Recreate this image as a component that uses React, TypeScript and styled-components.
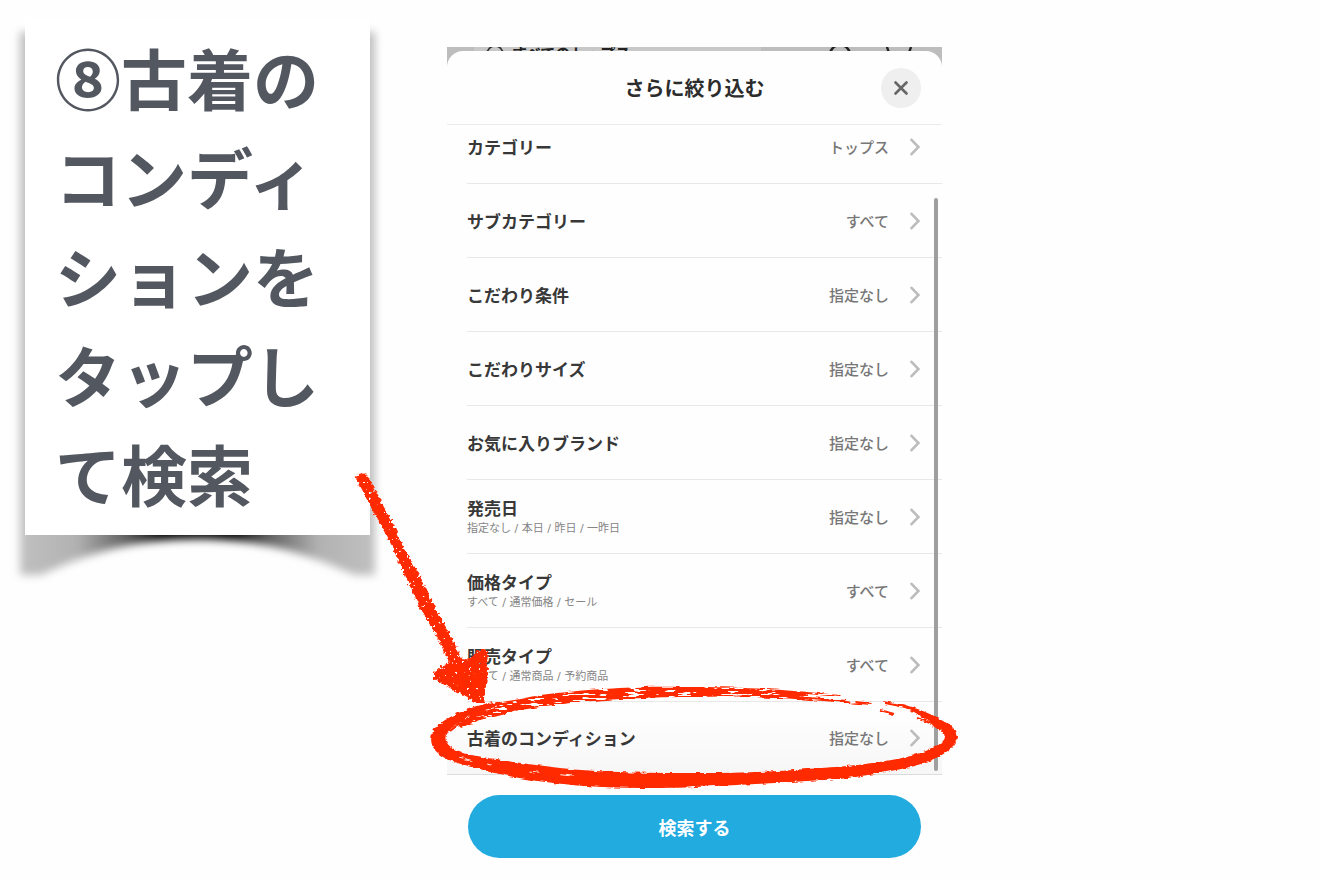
import React from "react";
import styled, { createGlobalStyle } from "styled-components";

const GlobalStyle = createGlobalStyle`
  *, *::before, *::after { box-sizing: border-box; }
  body {
    margin: 0;
    background: #fefefe;
    color: #383838;
    font-family: "Noto Sans CJK JP", "Noto Sans", sans-serif;
  }
  button { font: inherit; color: inherit; border: 0; cursor: pointer; }
`;

const RED = "#ff2a00";

const Page = styled.main`
  display: grid;
  grid-template-columns: 447fr 495fr 378fr;
  align-items: start;
  min-height: 100vh;
`;

/* ---------- instruction note ---------- */

const Note = styled.section`
  position: relative;
  isolation: isolate;
  margin: 18px 77px 0 25px;
  padding: 9px 0 13px 30px;
`;

const NoteShadow = styled.svg`
  position: absolute;
  z-index: -1;
  top: -10px;
  left: -20px;
  width: calc(100% + 40px);
  height: calc(100% + 70px);
`;

const NotePaper = styled.div`
  position: absolute;
  z-index: -1;
  inset: 0;
  background: #fff;
`;

const NoteText = styled.h1`
  margin: 0;
  color: #535760;
  font-size: 66px;
  line-height: 99px;
  font-weight: 700;
  white-space: nowrap;
`;

/* ---------- phone screen ---------- */

const Phone = styled.section`
  position: relative;
  margin-top: 47px;
`;

const Backdrop = styled.div`
  display: flex;
  justify-content: space-between;
  height: 23px;
  padding: 0 27px;
  overflow: hidden;
  background: #bdbdbd;
`;

const SearchStub = styled.div`
  display: flex;
  gap: 8px;
  flex: 0 0 65%;
  padding-left: 12px;
  background: #c8c8c8;
  color: #222;
  font-size: 15px;
  line-height: 12px;
  font-weight: 700;
`;

const StubIcons = styled.svg`
  flex: none;
  width: 90px;
  height: 23px;
`;

const Sheet = styled.div`
  position: relative;
  margin-top: -19px;
  border-radius: 16px 16px 0 0;
  background: #fefefe;
`;

const SheetHeader = styled.header`
  display: grid;
  grid-template-columns: 40px 1fr 40px;
  align-items: center;
  height: 74px;
  padding: 0 21px;
  border-bottom: 1px solid #ebebeb;
`;

const SheetTitle = styled.h2`
  grid-column: 2;
  margin: 0;
  color: #2c2c2c;
  font-size: 20px;
  line-height: 30px;
  font-weight: 700;
  text-align: center;
`;

const CloseButton = styled.button`
  display: grid;
  place-items: center;
  width: 40px;
  height: 40px;
  padding: 0;
  border-radius: 50%;
  background: #efefef;
`;

const ListArea = styled.div`
  position: relative;
`;

const ListViewport = styled.div`
  overflow: hidden;
  border-bottom: 1px solid #dcdcdc;
`;

const List = styled.ul`
  margin: -15px 0 0;
  padding: 0;
  list-style: none;
`;

const Item = styled.li<{ $last?: boolean }>`
  padding-left: 20px;
  background: ${(p) =>
    p.$last ? "linear-gradient(#fefefe 20%, #f6f6f6)" : "transparent"};
`;

const RowButton = styled.button<{ $last?: boolean }>`
  display: flex;
  align-items: center;
  width: 100%;
  height: ${(p) => (p.$last ? 72 : 74)}px;
  padding: 0 22px 0 0;
  border-bottom: ${(p) => (p.$last ? "0" : "1px solid #e8e8e8")};
  background: transparent;
  text-align: left;
`;

const RowText = styled.span`
  display: flex;
  flex: 1;
  flex-direction: column;
`;

const RowLabel = styled.span`
  font-size: 17px;
  line-height: 24px;
  font-weight: 700;
`;

const RowHint = styled.span`
  color: #858585;
  font-family: "DejaVu Sans", "Noto Sans CJK JP", sans-serif;
  font-size: 11px;
  line-height: 18px;
`;

const RowValue = styled.span`
  margin-right: 21px;
  color: #777;
  font-size: 15px;
  line-height: 24px;
  font-weight: 500;
`;

const ScrollThumb = styled.div`
  position: absolute;
  top: 73px;
  right: 4px;
  bottom: 4px;
  width: 4px;
  border-radius: 2px;
  background: #9f9f9f;
`;

const Footer = styled.footer`
  padding: 20px 21px 22px;
`;

const SearchButton = styled.button`
  display: block;
  width: 100%;
  height: 63px;
  border-radius: 32px;
  background: #21abdf;
  color: #fff;
  font-size: 18px;
  font-weight: 700;
`;

/* ---------- hand-drawn marks ---------- */

const Ring = styled.svg`
  position: absolute;
  left: -20px;
  bottom: -21px;
  width: calc(100% + 40px);
  height: 114px;
  overflow: visible;
  pointer-events: none;
`;

const Arrow = styled.svg`
  position: absolute;
  left: -98px;
  bottom: 69px;
  width: 140px;
  height: 238px;
  overflow: visible;
  pointer-events: none;
`;

const rows: { label: string; value: string; hint?: string }[] = [
  { label: "カテゴリー", value: "トップス" },
  { label: "サブカテゴリー", value: "すべて" },
  { label: "こだわり条件", value: "指定なし" },
  { label: "こだわりサイズ", value: "指定なし" },
  { label: "お気に入りブランド", value: "指定なし" },
  { label: "発売日", value: "指定なし", hint: "指定なし / 本日 / 昨日 / 一昨日" },
  { label: "価格タイプ", value: "すべて", hint: "すべて / 通常価格 / セール" },
  { label: "販売タイプ", value: "すべて", hint: "すべて / 通常商品 / 予約商品" },
  { label: "古着のコンディション", value: "指定なし" },
];

const Chevron = () => (
  <svg width="10" height="18" viewBox="0 0 10 18" fill="none" aria-hidden="true">
    <path d="M1.5 1.8 8.5 9l-7 7.2" stroke="#bcbcbc" strokeWidth="2.6" strokeLinecap="round" />
  </svg>
);

const CrayonRing = () => (
  <Ring viewBox="0 0 535 114" preserveAspectRatio="none" aria-hidden="true">
    <defs>
      <filter id="ring-edge" x="-5%" y="-10%" width="110%" height="120%" colorInterpolationFilters="sRGB">
        <feTurbulence type="fractalNoise" baseFrequency="0.12 0.35" numOctaves="3" seed="4" result="n" />
        <feDisplacementMap in="SourceGraphic" in2="n" scale="4" xChannelSelector="R" yChannelSelector="G" />
      </filter>
      <filter id="ring-dry" x="-5%" y="-20%" width="110%" height="140%" colorInterpolationFilters="sRGB">
        <feTurbulence type="fractalNoise" baseFrequency="0.06 0.5" numOctaves="3" seed="9" result="n" />
        <feDisplacementMap in="SourceGraphic" in2="n" scale="4" xChannelSelector="R" yChannelSelector="G" result="d" />
        <feColorMatrix in="n" type="matrix" values="0 0 0 0 0  0 0 0 0 0  0 0 0 0 0  0 0 0 -22 14.2" result="holes" />
        <feComposite in="d" in2="holes" operator="in" />
      </filter>
    </defs>
    {/* upper sweep, thinning towards the right */}
    <path
      filter="url(#ring-dry)"
      fill={RED}
      d="M26 36C46 27 66 21 93 17C125 10 160 8 193 6C225 4 250 5 273 5C305 5 350 7 380 10L414 13L412 15L380 12L382 15L420 18L446 21L444 23L396 19C365 16 340 16 323 15C300 14 285 15 263 15C235 15 215 16 193 17C165 19 150 20 136 22C110 25 85 29 63 35C52 38 42 42 34 46Z"
    />
    {/* left turn and lower sweep up to the right end */}
    <path
      filter="url(#ring-edge)"
      fill={RED}
      d="M66 20C38 26 18 36 8 46C3 54 3 60 7 67C14 76 24 79 37 83C70 93 98 97 126 101C160 105 190 106 226 106C250 106 270 105 290 104C330 102 370 100 413 97C445 93 470 88 488 84C500 80 507 77 513 74C524 68 530 61 530 54C528 46 524 43 516 39C504 31 488 26 475 22L456 19L458 22L478 26C492 32 500 37 505 42C514 47 518 51 518 56C515 62 508 65 501 68C490 73 480 75 470 77C440 83 410 85 380 87C345 90 310 91 273 91C230 91 180 91 133 86C110 83 90 81 70 77C50 75 34 71 27 67C18 62 17 56 20 51C27 42 45 34 70 29Z"
    />
    <path filter="url(#ring-edge)" stroke={RED} strokeWidth="2" fill="none" d="M453 28l14 4M490 36C500 39 508 43 513 48M60 33C45 37 32 41 23 49" />
    <path filter="url(#ring-edge)" stroke="#fff" strokeWidth="0.9" fill="none" strokeDasharray="13 16 5 38 9 22" d="M70 25C40 33 22 42 14 52M32 75C65 85 105 90 155 95" />
  </Ring>
);

const CrayonArrow = () => (
  <Arrow viewBox="0 0 140 238" aria-hidden="true">
    <defs>
      <filter id="arrow-edge" x="-10%" y="-10%" width="120%" height="120%" colorInterpolationFilters="sRGB">
        <feTurbulence type="fractalNoise" baseFrequency="0.3" numOctaves="2" seed="7" result="n" />
        <feDisplacementMap in="SourceGraphic" in2="n" scale="6" xChannelSelector="R" yChannelSelector="G" result="d" />
        <feColorMatrix in="n" type="matrix" values="0 0 0 0 0  0 0 0 0 0  0 0 0 0 0  0 0 0 -24 18.2" result="holes" />
        <feComposite in="d" in2="holes" operator="in" />
      </filter>
    </defs>
    <path
      filter="url(#arrow-edge)"
      fill={RED}
      d="M5 8L17 5L28 26L43 54L56 82L72 110L86 140L102 168L114 193L119 191L130 182L138 181L139 205L134 235L127 235L108 224L85 211L85 205L92 199L101 194L98 190L86 164L70 138L56 107L43 78L30 54L16 28Z"
    />
  </Arrow>
);

export default function App() {
  return (
    <>
      <GlobalStyle />
      <Page>
        <Note>
          <NoteShadow viewBox="0 0 385 587" preserveAspectRatio="none" aria-hidden="true">
            <defs>
              <linearGradient id="curl" x1="0" x2="1" y1="0" y2="0">
                <stop offset="0" stopColor="#c0c0c0" />
                <stop offset="0.16" stopColor="#b2b2b2" />
                <stop offset="0.3" stopColor="#606060" />
                <stop offset="0.4" stopColor="#000" />
                <stop offset="0.6" stopColor="#000" />
                <stop offset="0.7" stopColor="#606060" />
                <stop offset="0.84" stopColor="#b2b2b2" />
                <stop offset="1" stopColor="#c0c0c0" />
              </linearGradient>
              <filter id="soft" x="-5%" y="-5%" width="110%" height="110%" colorInterpolationFilters="sRGB">
                <feGaussianBlur stdDeviation="4" />
              </filter>
            </defs>
            <path
              filter="url(#soft)"
              fill="url(#curl)"
              d="M15 24H370V567H350C305 548 265 531 192 531S80 548 35 567H15Z"
            />
          </NoteShadow>
          <NotePaper />
          <NoteText>
            ⑧古着の
            <br />
            コンディ
            <br />
            ションを
            <br />
            タップし
            <br />
            て検索
          </NoteText>
        </Note>

        <Phone>
          <Backdrop aria-hidden="true">
            <SearchStub>
              <svg width="18" height="18" viewBox="0 0 18 18" fill="none">
                <circle cx="9" cy="7" r="8" stroke="#333" strokeWidth="1.6" />
              </svg>
              すべてのトップス
            </SearchStub>
            <StubIcons viewBox="0 0 90 23" fill="none" stroke="#222" strokeWidth="2.4">
              <circle cx="15" cy="8" r="10" />
              <path d="M62 0c3 10 6 14 12 14S83 10 86 0" />
            </StubIcons>
          </Backdrop>
          <Sheet>
            <SheetHeader>
              <SheetTitle>さらに絞り込む</SheetTitle>
              <CloseButton type="button" aria-label="閉じる">
                <svg width="14" height="14" viewBox="0 0 14 14" fill="none" aria-hidden="true">
                  <path d="M1.5 1.5l11 11M12.5 1.5l-11 11" stroke="#666" strokeWidth="2.6" strokeLinecap="round" />
                </svg>
              </CloseButton>
            </SheetHeader>
            <ListArea>
              <ListViewport>
                <List>
                  {rows.map((row, i) => {
                    const last = i === rows.length - 1;
                    return (
                      <Item key={row.label} $last={last}>
                        <RowButton type="button" $last={last}>
                          <RowText>
                            <RowLabel>{row.label}</RowLabel>
                            {row.hint && <RowHint>{row.hint}</RowHint>}
                          </RowText>
                          <RowValue>{row.value}</RowValue>
                          <Chevron />
                        </RowButton>
                      </Item>
                    );
                  })}
                </List>
              </ListViewport>
              <ScrollThumb />
              <CrayonRing />
              <CrayonArrow />
            </ListArea>
            <Footer>
              <SearchButton type="button">検索する</SearchButton>
            </Footer>
          </Sheet>
        </Phone>
      </Page>
    </>
  );
}
